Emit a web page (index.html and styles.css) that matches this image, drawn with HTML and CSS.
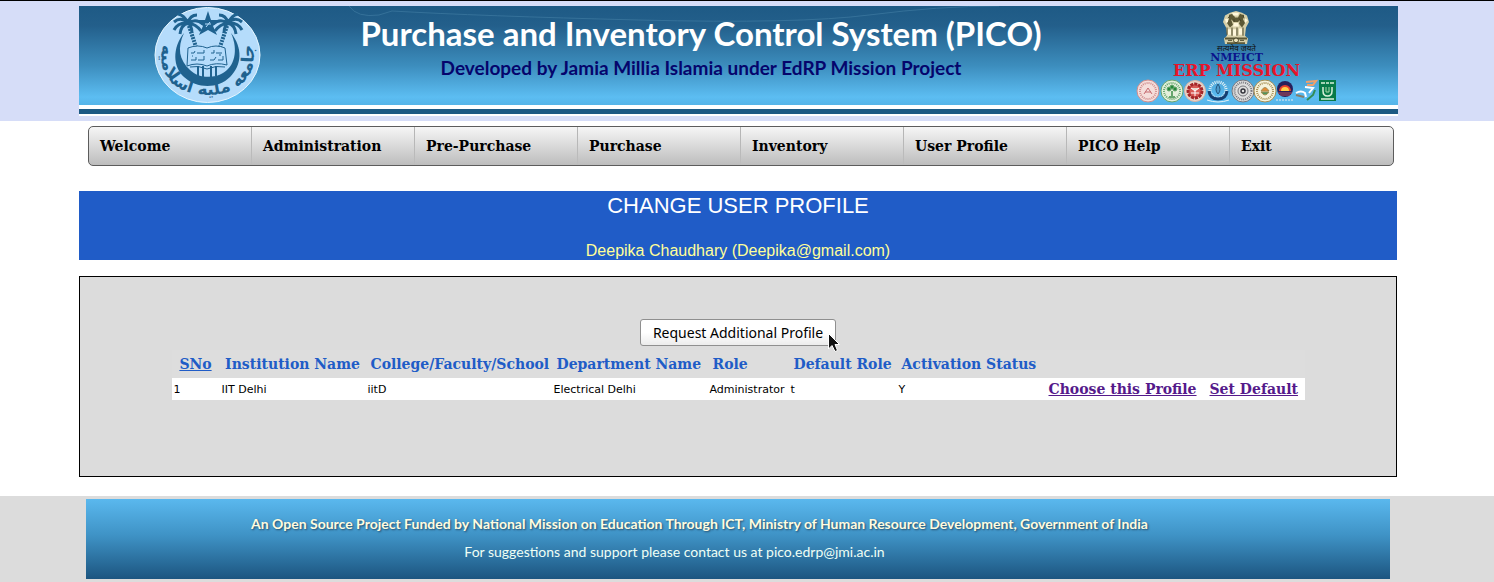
FILE: index.html
```
<!DOCTYPE html>
<html lang="en">
<head>
<meta charset="utf-8">
<title>Purchase and Inventory Control System (PICO)</title>
<link rel="stylesheet" href="styles.css">
</head>
<body>
<header class="top">
  <div class="banner">
    <svg class="wave" viewBox="0 0 1319 99" preserveAspectRatio="none" aria-hidden="true"><path d="M270 0Q278 12 300 9L313 5Q400 10 560 14T790 9T920 0"/></svg>
    <svg class="crest" viewBox="0 0 107 98" role="img" aria-label="Jamia Millia Islamia emblem">
      <defs>
        <path id="ring" d="M14 24C-6 68 23 89 53.500 89S113 68 93 24"/>
        <g id="palm">
          <path d="M0 0L9 27" stroke-width="4" stroke-dasharray="2 1"/>
          <path d="M0 0Q-7-7-14-1M0 0Q-10-1-14 7M0 0Q-7 2-8 11M0 0Q-4-8-10-9M0 0Q2-8 9-8M0 0Q8-5 15 1M0 0Q8 1 13 8M0 0Q4 3 4 10" stroke-width="3"/>
        </g>
      </defs>
      <ellipse class="disc" cx="53.500" cy="49" rx="52.500" ry="47.500"/>
      <path class="ink" d="M30 27C18 42 19 61 30 71C43 83 64 83 76 71C88 59 89 42 77 27C85 45 80 61 69 67C59 73 44 72 36 64C25 54 23 42 30 27Z"/>
      <g class="line"><use href="#palm" x="34" y="17"/><use href="#palm" transform="translate(74 17) scale(-1 1)"/></g>
      <path class="ink" d="M54 5L57 14H65L59 20L63 29L54 24L45 29L49 20L43 14H51Z"/>
      <path class="spark" d="M51 18H57M52 21L56 16"/>
      <path class="line" d="M44 60V70M49 60V71M57 60V71M62 60V70" stroke-width="2"/>
      <path class="book" d="M34 42Q44 38 53 42Q62 38 71 42L73 59Q62 56 53 60Q43 56 33 60Z"/>
      <path class="line" d="M37 47H40L41 45M43 47H50V44M57 47H60V44M62 47H68M37 54H42V51M44 54H50V50M56 54H60L62 51M64 54H69V50M38 50H39M66 48V50"/>
      <path class="line" d="M36 61Q44 59 53 63Q62 59 71 61"/>
      <text class="motto"><textPath href="#ring" startOffset="50%">جامعه مليه اسلاميه</textPath></text>
    </svg>
    <div class="titles">
      <h1>Purchase and Inventory Control System (PICO)</h1>
      <p>Developed by Jamia Millia Islamia under EdRP Mission Project</p>
    </div>
    <div class="mission">
      <svg class="lions" viewBox="0 0 30 36" preserveAspectRatio="none" aria-hidden="true">
        <path fill="#d6cfa8" d="M4 5L9 2L15 0L21 2L26 5L28 12L25 18L24 27L27 30L26 36H4L3 30L6 27L5 18L2 12Z"/>
        <path fill="#5d5936" d="M8 4L12 3L14 7L17 7L19 3L23 5L22 9L24 13L21 18L18 14L19 10L17 12H13L10 9L12 15L9 18L6 13L8 9ZM4 29H26V31H4ZM6 34H24V36H6Z"/>
        <path fill="#fff8dc" d="M11 2H18L17 5H12ZM4 9L7 8L7 12L5 13ZM24 8L27 10L24 13ZM13 13H17L18 17H12ZM7 20H10V26H7ZM12 20H15V27H12ZM18 19H21V26H18Z"/>
        <path stroke="#454226" fill="none" d="M11 18V27M16 18V27M22 18V27M6 18V26M9 5L7 8M22 4L23 8M13 9V12M18 8L20 11"/>
        <circle cx="15" cy="32" r="2.500" fill="#eee5bd" stroke="#454226"/><path stroke="#454226" d="M7 32H11M19 32H23"/>
      </svg>
      <span class="satya" lang="hi">सत्यमेव जयते</span>
      <span class="nmeict">NMEICT</span>
      <span class="erp">ERP MISSION</span>
      <svg class="seals" viewBox="0 0 201 24" aria-hidden="true">
        <g fill="#f5dedb" stroke="#d18d8d"><circle cx="12" cy="12" r="11"/><circle cx="12" cy="12" r="8" fill="none" stroke-dasharray="1 1" stroke-width="2"/><path d="M8 15L12 9L16 15M9 13H15" fill="none" stroke="#c56a70"/></g>
        <g fill="#e4f0dc" stroke="#66a56d"><circle cx="36" cy="12" r="11"/><circle cx="36" cy="12" r="8" fill="none" stroke-dasharray="1 1" stroke-width="2"/><path d="M36 12V17M33 18H39" stroke-width="2"/><circle cx="33" cy="10" r="2" fill="#25883a"/><circle cx="39" cy="10" r="2" fill="#25883a"/><circle cx="36" cy="8" r="2" fill="#25883a"/></g>
        <g fill="#ead8cc" stroke="#a32629"><circle cx="59" cy="12" r="10.500" stroke="#d9b4a5"/><circle cx="59" cy="12" r="7" fill="#d85a55" stroke-width="3" stroke-dasharray="3 1"/><path d="M55 9L59 12L63 9M59 12V17M55 14H63" stroke="#fff"/></g>
        <g fill="none" stroke="#e5f3f7"><circle cx="82" cy="11" r="8" stroke-dasharray="1 1" stroke-width="3"/><path d="M73 12Q74 20 82 20T91 12" stroke="#153e70" stroke-width="3"/><path d="M82 5Q78 11 82 15Q86 11 82 5" fill="#4d9aca" stroke="#24567f"/><path d="M71 21Q82 25 93 21"/></g>
        <g fill="#dedede" stroke="#77777d"><circle cx="107" cy="12" r="11"/><circle cx="107" cy="12" r="8.500" fill="none" stroke-width="2" stroke-dasharray="1 1"/><circle cx="107" cy="12" r="5"/><circle cx="107" cy="12" r="2" stroke="#33333b" stroke-width="1.500"/></g>
        <g fill="#f6f3dc" stroke="#a68d52"><circle cx="129" cy="12" r="11"/><circle cx="129" cy="12" r="8" fill="none" stroke-width="2" stroke-dasharray="1 1"/><path d="M125 12Q129 5 133 12Z" fill="#eb8a31"/><path d="M125 13Q129 19 133 13Z" fill="#4a9660"/></g>
        <g><circle cx="149" cy="10" r="8" fill="#28205b"/><path d="M143 12A6 6 0 0 1 155 12Z" fill="#e8432d"/><path d="M145 12A4 4 0 0 1 153 12Z" fill="#ffd14a"/><path d="M142 14H156M144 16H154" stroke="#b5515a"/><path d="M140 21H158" stroke="#eee" stroke-dasharray="2 1"/></g>
        <g fill="none" stroke-width="2"><path d="M170 3L180 2L177 6L171 6" stroke="#f0a06a"/><path d="M169 8L177 9L173 14M160 14Q165 11 169 14L170 18" stroke="#fff"/><path d="M171 21L177 16L179 11" stroke="#328c55"/><path d="M160 16L168 18" stroke="#857d69"/></g>
        <g><path fill="#087a48" d="M183 1H200V22H183Z"/><path d="M185 4H189M190 4H193M194 4H198M187 8V12Q187 17 191.500 17T196 12V8M185 20H198" fill="none" stroke="#d8f1d9" stroke-width="1.500"/><path d="M190 8V13H193V8" fill="none" stroke="#a9dca9"/></g>
      </svg>
    </div>
  </div>
</header>

<main class="page">
  <nav class="menu">
    <a href="#">Welcome</a><a href="#">Administration</a><a href="#">Pre-Purchase</a><a href="#">Purchase</a><a href="#">Inventory</a><a href="#">User Profile</a><a href="#">PICO Help</a><a href="#">Exit</a>
  </nav>
  <section class="heading">
    <h2>CHANGE USER PROFILE</h2>
    <p>Deepika Chaudhary (Deepika@gmail.com)</p>
  </section>
  <section class="panel">
    <div class="action">
      <button type="button">Request Additional Profile</button>
      <svg class="pointer" viewBox="0 0 12 20" aria-hidden="true"><path d="M.5 .5V16L4 12.500L7 18.500L9.500 17.500L7 11.500H11.500Z"/></svg>
    </div>
    <table>
      <colgroup><col class="c-no"><col class="c-inst"><col class="c-college"><col class="c-dept"><col class="c-role"><col class="c-default"><col class="c-status"><col class="c-choose"><col class="c-set"></colgroup>
      <thead>
        <tr><th class="mid"><a href="#">SNo</a></th><th class="mid">Institution Name</th><th>College/Faculty/School</th><th>Department Name</th><th>Role</th><th>Default Role</th><th>Activation Status</th><td></td><td></td></tr>
      </thead>
      <tbody>
        <tr><td>1</td><td>IIT Delhi</td><td>iitD</td><td>Electrical Delhi</td><td>Administrator</td><td>t</td><td>Y</td><td class="link"><a href="#">Choose this Profile</a></td><td class="link"><a href="#">Set Default</a></td></tr>
      </tbody>
    </table>
  </section>
</main>

<footer class="bottom">
  <div class="credits">
    <p class="funded">An Open Source Project Funded by National Mission on Education Through ICT, Ministry of Human Resource Development, Government of India</p>
    <p class="support">For suggestions and support please contact us at pico.edrp@jmi.ac.in</p>
  </div>
</footer>
</body>
</html>
```
FILE: styles.css
```
* { box-sizing: border-box; }
body { margin: 0; background: #fff; color: #000; font-family: "DejaVu Sans", sans-serif; font-size: 11px; }
h1, h2, p { margin: 0; }

.top { padding: 5px 96px 5px 79px; background: #d6ddf8; border-top: 1px solid #000; }
.banner {
  position: relative;
  display: flex; justify-content: space-between; align-items: flex-start;
  height: 99px; padding: 0 61px 0 75px;
  background: linear-gradient(#1e5a85, #235f8b 20%, #3c8dbd 60%, #5cbdf2 92%, #55b4e8);
  margin-bottom: 11px;
  box-shadow: 0 4px #fff, 0 9px #1c5a84, 0 11px #fff;
}
.wave { position: absolute; left: 0; top: 0; width: 100%; height: 100%; fill: none; stroke: #4a86ab; opacity: 0.5; }
.crest { width: 107px; height: 98px; flex: none; }
.disc { fill: #b5dcfb; stroke: #e6f6ff; stroke-width: 1; }
.ink { fill: #1f628f; }
.line { fill: none; stroke: #1f628f; }
.spark { stroke: #b5dcfb; fill: none; }
.book { fill: #b5dcfb; stroke: #1f628f; stroke-width: 1; }
.motto { font: bold 17px "DejaVu Sans", sans-serif; fill: #1f628f; text-anchor: middle; }
.titles { position: relative; padding: 7px 0 0 5px; text-align: center; font-family: Lato, sans-serif; white-space: nowrap; }
.titles h1 { font-size: 33px; line-height: 40px; font-weight: bold; color: #fff; }
.titles p { font-size: 19px; line-height: 30px; font-weight: bold; color: #05056c; }
.mission { display: flex; flex-direction: column; align-items: center; width: 201px; padding-top: 5px; font-family: "DejaVu Serif", serif; font-weight: bold; white-space: nowrap; }
.lions { width: 30px; height: 33px; }
.satya { font: 8px/8px "Noto Sans", sans-serif; color: #111; }
.nmeict { font-size: 11px; line-height: 11px; color: #0b148c; }
.erp { font-size: 16px; line-height: 16px; color: #e8142a; }
.seals { width: 201px; height: 24px; }

.page { padding: 5px 97px 19px 79px; }
.menu {
  display: grid; grid-template-columns: repeat(8, 1fr);
  margin: 0 3px 25px 9px; overflow: hidden;
  border: 1px solid #5c5c5c; border-radius: 5px;
  background: linear-gradient(#f6f6f6, #bdbdbd);
}
.menu a { padding: 0 11px; font: bold 14px/38px "DejaVu Serif", serif; color: #000; text-decoration: none; border-right: 1px solid; border-image: linear-gradient(#b4b4b4, #bdbdbd) 1; }
.menu a:last-child { border: 0; }
.heading { background: #205cc7; text-align: center; font-family: "Liberation Sans", Arial, sans-serif; margin-bottom: 16px; }
.heading h2 { font-size: 22px; line-height: 30px; font-weight: normal; color: #fff; margin-bottom: 21px; }
.heading p { font-size: 16px; line-height: 18px; color: #ffff99; }
.panel { border: 1px solid #000; background: #dcdcdc; padding: 42px 0 76px; }
.action { position: relative; width: max-content; margin: 0 auto 4px; }
.action button { display: block; height: 27px; padding: 0 12px; border: 1px solid #8f8f8f; border-radius: 3px; background: linear-gradient(#fff 50%, #ececec); font: 14px "Noto Sans", sans-serif; color: #000; }
.pointer { position: absolute; right: -4px; top: 14px; width: 12px; height: 20px; fill: #111; stroke: #fff; }
table { width: 86%; margin: 0 auto; table-layout: fixed; border-collapse: collapse; white-space: nowrap; }
thead { background: #ddd; }
tbody { background: #fff; }
th { height: 28px; padding: 0 5px; text-align: left; font: bold 14px "DejaVu Serif", serif; color: #205cc7; }
th.mid { padding: 0; text-align: center; }
th a { color: inherit; }
td { height: 22px; padding: 0 2px; }
.link { padding: 0 7px; font: bold 14px "DejaVu Serif", serif; }
.link a { color: #551a8b; }
.c-no { width: 48px; }
.c-inst { width: 146px; }
.c-college { width: 186px; }
.c-dept { width: 156px; }
.c-role { width: 81px; }
.c-default { width: 108px; }
.c-status { width: 145px; }
.c-choose { width: 161px; }
.c-set { width: 102px; }

.bottom { background: #dcdcdc; padding: 3px 104px 3px 86px; }
.credits { padding: 15px 77px 15px 0; text-align: center; background: linear-gradient(#5ab8ee, #3f93c6 45%, #1c5580); font-family: Lato, sans-serif; }
.funded { font-size: 14px; line-height: 20px; font-weight: bold; color: #fffce0; text-shadow: 1px 1px 2px #244b68; }
.support { padding: 6px 50px 0 0; font-size: 14px; line-height: 24px; color: #effff5; }
```
